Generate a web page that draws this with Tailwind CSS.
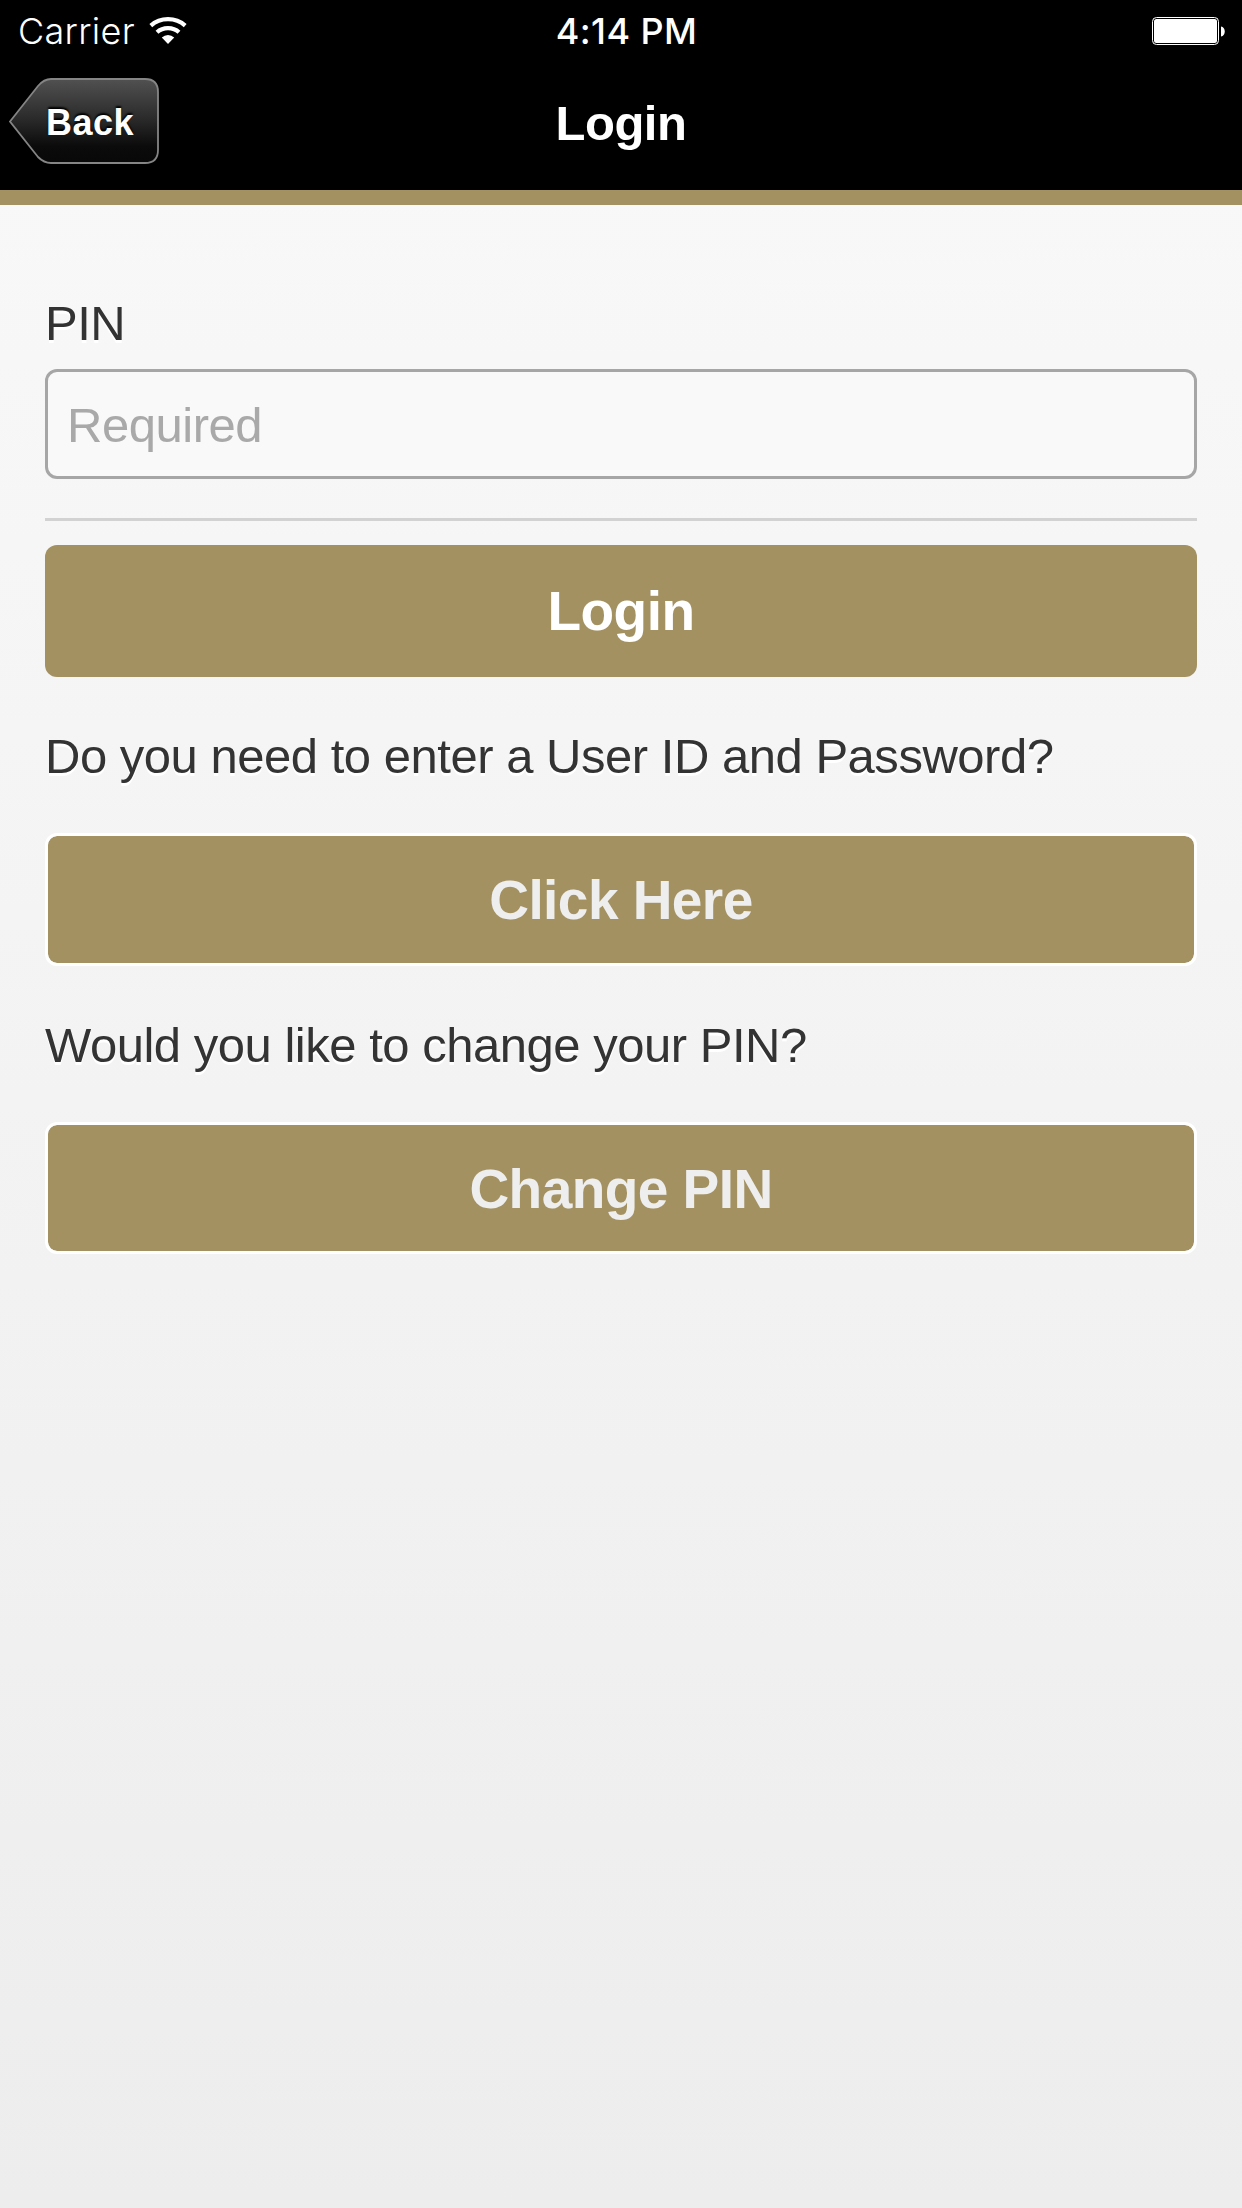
<!DOCTYPE html>
<html lang="en">
<head>
<meta charset="utf-8">
<title>Login</title>
<script src="https://cdn.jsdelivr.net/npm/@tailwindcss/browser@4"></script>
</head>
<body class="font-['Liberation_Sans',Arial,sans-serif]">
<div class="flex h-[2208px] w-[1242px] flex-col overflow-hidden bg-linear-to-b from-[#f9f9f9] to-[#ededed] text-[49px] leading-[54px] tracking-[-0.48px] text-[#333]">
  <header class="h-[205px] shrink-0 border-b-[15px] border-[#a39161] bg-black text-white">
    <div class="grid h-[62px] grid-cols-3 items-center pr-[17px] pl-[18px] font-['Inter',sans-serif] text-[36px] leading-[62px] tracking-[0.4px]">
      <div class="flex items-center gap-[14px]">
        <span class="font-light tracking-[0.3px]">Carrier</span>
        <svg class="h-[28px] w-[38px]" viewBox="0 0 38 28" fill="none" stroke="#fff" stroke-width="4.2">
          <path d="M1.8 8.6Q9 2.2 19 2.2T36.200 8.600"/>
          <path d="M8 15.300Q12.500 11.200 19 11.200T30 15.300"/>
          <path d="M12.800 20.500Q15.500 18 19 18T25.200 20.500L19 27Z" fill="#fff" stroke="none"/>
        </svg>
      </div>
      <div class="pl-[10px] text-center font-medium">4:14 PM</div>
      <svg class="h-[30px] w-[73px] justify-self-end" viewBox="0 0 73 30">
        <rect x=".5" y="1.500" width="66" height="27" rx="4" fill="none" stroke="#fff"/>
        <rect x="2" y="3" width="63" height="24" rx="2.500" fill="#fff"/>
        <path d="M69 10.500c5 .5 5 9.500 0 10z" fill="#fff"/>
      </svg>
    </div>
    <div class="grid h-[128px] grid-cols-3 items-start px-[9px]">
      <button class="relative mt-[16px] h-[87px] w-[150px]">
        <svg class="absolute inset-0 h-[87px] w-[150px]" viewBox="0 0 150 87">
          <defs><linearGradient id="back" x2="0" y2="1"><stop stop-color="#515151"/><stop offset=".5" stop-color="#282828"/><stop offset=".8" stop-color="#0b0b0b"/><stop offset="1" stop-color="#080808"/></linearGradient></defs>
          <path d="M1 43.500L29 8Q35 1 42 1H136Q149 1 149 14V72Q149 85 136 85H42Q35 85 29 79Z" fill="url(#back)" stroke="#858585" stroke-width="1.800"/>
        </svg>
        <span class="absolute top-[25px] left-[37px] text-[36px] leading-[40px] font-bold tracking-[0.5px] text-shadow-[0_-2px_2px_#000]">Back</span>
      </button>
      <h1 class="pt-[34px] text-center font-bold">Login</h1>
    </div>
  </header>
  <main class="flex flex-col px-[45px] pt-[91px]">
    <label for="pin" class="text-shadow-[0_3px_0_#fff]">PIN</label>
    <input id="pin" class="mt-[19px] h-[110px] rounded-[12px] border-[3px] border-[#a6a6a6] bg-[#f9f9f9] px-[19px] pt-[2px] placeholder:text-[#a9a9a9]" placeholder="Required">
    <hr class="mt-[39px] h-[3px] border-0 bg-[#d2d2d2]">
    <button class="mt-[24px] h-[132px] rounded-[12px] bg-[#a39161] text-[55px] font-bold tracking-[-0.55px] text-white">Login</button>
    <p class="mt-[52px] text-shadow-[0_3px_0_#fff]">Do you need to enter a User ID and Password?</p>
    <button class="mt-[50px] h-[133px] rounded-[12px] border-[3px] border-white bg-[#a39161] bg-clip-padding text-[55px] font-bold tracking-[-0.55px] text-[#eee]">Click Here</button>
    <p class="mt-[52px] text-shadow-[0_3px_0_#fff]">Would you like to change your PIN?</p>
    <button class="mt-[50px] h-[132px] rounded-[12px] border-[3px] border-white bg-[#a39161] bg-clip-padding pt-[2px] text-[55px] font-bold tracking-[-0.55px] text-[#eee]">Change PIN</button>
  </main>
</div>
</body>
</html>
